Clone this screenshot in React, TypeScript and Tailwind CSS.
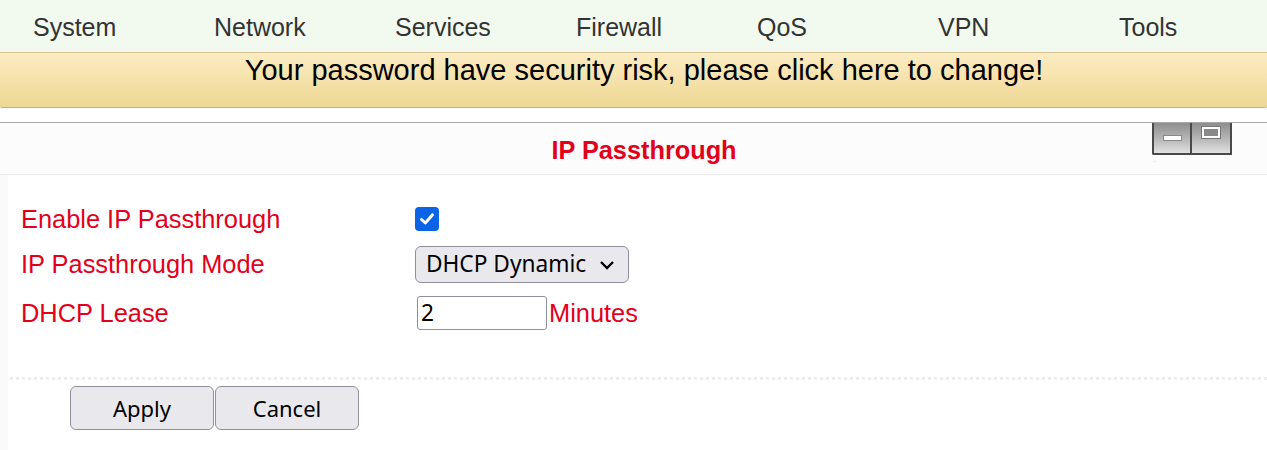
const navItems = ["System", "Network", "Services", "Firewall", "QoS", "VPN", "Tools"];

const arial = "font-['Liberation_Sans',Arial,sans-serif]";
const uiFont = "font-['Noto_Sans','Open_Sans',sans-serif]";

const WindowButtons = () => (
  <div className="absolute right-[35px] top-0 flex">
    <div className="w-[40px] h-[32px] bg-gradient-to-b from-[#8e8e8e] via-[#b4b4b4] to-[#e2e2e2] border-x-2 border-b-2 border-[#4a4a4a] flex items-center justify-center rounded-bl-[2px]">
      <div className="w-[17px] h-[4px] bg-white outline outline-1 outline-[#888]" />
    </div>
    <div className="w-[40px] h-[32px] bg-gradient-to-b from-[#8e8e8e] via-[#b4b4b4] to-[#e2e2e2] border-r-2 border-b-2 border-[#4a4a4a] flex justify-center pt-[4px]">
      <div className="w-[18px] h-[11px] border-2 border-white bg-[#8a8a8a] outline outline-1 outline-[#777]" />
    </div>
    <div className="absolute left-[1px] top-[34px] text-[6px] leading-none text-[#bbb]">..</div>
  </div>
);

const Row = ({ label, h, children }: { label: string; h: string; children: React.ReactNode }) => (
  <div className={`flex items-center ${h}`}>
    <div className="w-[407px] pl-[13px] text-[25.4px] text-[#e3001b]">{label}</div>
    <div className="flex items-center">{children}</div>
  </div>
);

export default function App() {
  return (
    <div className={`${arial} w-[1267px] h-[450px] bg-white overflow-hidden flex flex-col`}>
      <nav className="flex h-[53px] shrink-0 bg-[#f2faf0] border-b border-[#d6c593]">
        {navItems.map((item) => (
          <div key={item} className="w-[182px] pl-[33px] pt-[12px] text-[25px] text-[#333] leading-[30px]">
            {item}
          </div>
        ))}
      </nav>
      <div className="h-[55px] shrink-0 bg-gradient-to-b from-[#fcecc2] to-[#eed793] border-b border-[#c7b27a] rounded-b-[2px] pl-[21px] pt-[1px] text-center text-[29px] leading-[33px] text-black">
        Your password have security risk, please click here to change!
      </div>
      <div className="mt-[14px] relative border-t border-[#a8a8a8] flex-1 flex flex-col">
        <WindowButtons />
        <div className="h-[52px] shrink-0 bg-[#fcfcfc] border-b border-[#ebebeb] pl-[21px] pt-[4px] flex items-center justify-center text-[25.3px] font-bold text-[#e3001b]">
          IP Passthrough
        </div>
        <div className="flex flex-1">
          <div className="w-[8px] bg-[#fafafa]" />
          <div className="flex-1 pt-[21px]">
            <Row label="Enable IP Passthrough" h="h-[46px]">
              <div className="w-[24px] h-[24px] rounded-[4px] bg-[#0b63e5] flex items-center justify-center">
                <svg width="18" height="18" viewBox="0 0 18 18">
                  <path d="M3.5 9.5 L7.3 13 L14.5 4.8" fill="none" stroke="white" strokeWidth="3" strokeLinecap="round" strokeLinejoin="round" />
                </svg>
              </div>
            </Row>
            <Row label="IP Passthrough Mode" h="h-[45px]">
              <div className={`${uiFont} w-[214px] h-[37px] rounded-[6px] bg-[#e9e9ed] border border-[#8f8f9d] flex items-center pl-[10px] pr-[13px] text-[22.7px] text-black`}>
                <span className="flex-1">DHCP Dynamic</span>
                <svg width="16" height="12" viewBox="0 0 16 12">
                  <path d="M2 3 L8 9 L14 3" fill="none" stroke="black" strokeWidth="2.4" />
                </svg>
              </div>
            </Row>
            <Row label="DHCP Lease" h="h-[52px]">
              <div className={`${uiFont} ml-[2px] w-[130px] h-[34px] rounded-[3px] border border-[#8f8f9d] flex items-center pl-[3px] text-[22.7px] text-black`}>
                2
              </div>
              <span className="ml-[2px] text-[25.4px] text-[#e3001b]">Minutes</span>
            </Row>
            <div className="mt-[38px] ml-[2px] border-t-[3px] border-dotted border-[#eeeeee]" />
            <div className={`${uiFont} flex ml-[62px] mt-[6px] gap-[1px]`}>
              <button className="w-[144px] h-[44px] rounded-[6px] bg-[#e9e9ed] border border-[#8f8f9d] text-[22px] text-black">Apply</button>
              <button className="w-[144px] h-[44px] rounded-[6px] bg-[#e9e9ed] border border-[#8f8f9d] text-[22px] text-black">Cancel</button>
            </div>
          </div>
        </div>
      </div>
    </div>
  );
}
